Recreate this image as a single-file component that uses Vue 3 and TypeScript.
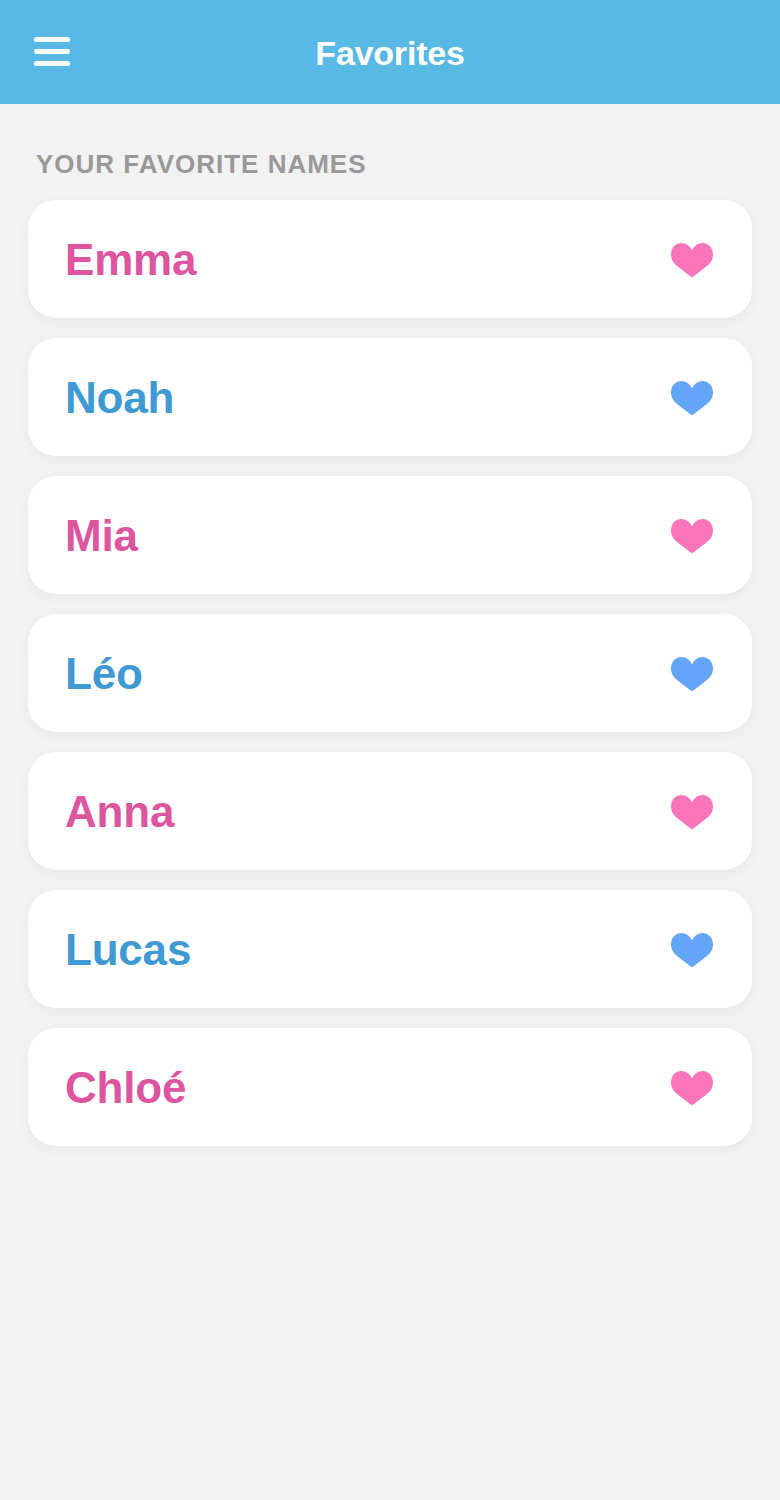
<script setup lang="ts">
interface FavName {
  name: string
  kind: 'girl' | 'boy'
}

const names: FavName[] = [
  { name: 'Emma', kind: 'girl' },
  { name: 'Noah', kind: 'boy' },
  { name: 'Mia', kind: 'girl' },
  { name: 'Léo', kind: 'boy' },
  { name: 'Anna', kind: 'girl' },
  { name: 'Lucas', kind: 'boy' },
  { name: 'Chloé', kind: 'girl' }
]
</script>

<template>
  <div class="page">
    <header class="top-bar">
      <button class="menu-btn" aria-label="Menu">
        <span></span>
        <span></span>
        <span></span>
      </button>
      <h1 class="title">Favorites</h1>
    </header>

    <main class="content">
      <h2 class="section-label">YOUR FAVORITE NAMES</h2>
      <ul class="list">
        <li v-for="item in names" :key="item.name" class="card">
          <span class="name" :class="item.kind">{{ item.name }}</span>
          <svg class="heart" :class="item.kind" viewBox="0 -2 44 36" width="44" height="36">
            <path d="M22 34C21.400 34 20.900 33.700 20.300 33.200L7 23C3 19.800 1 16 1 11.500 1 5 5.400 0 11.200 0 15.800 0 19.800 2.800 22 7.200 24.200 2.800 28.200 0 32.800 0 38.600 0 43 5 43 11.500 43 16 41 19.800 37 23L23.700 33.200C23.100 33.700 22.600 34 22 34Z" />
          </svg>
        </li>
      </ul>
    </main>
  </div>
</template>

<style scoped>
.page {
  width: 780px;
  height: 1500px;
  background: #f2f2f2;
  font-family: 'Liberation Sans', Arial, sans-serif;
}

.top-bar {
  position: relative;
  height: 104px;
  background: #59b9e5;
  display: flex;
  align-items: center;
  justify-content: center;
}

.menu-btn {
  position: absolute;
  left: 34px;
  top: 37px;
  width: 36px;
  height: 29px;
  padding: 0;
  border: none;
  background: transparent;
  display: flex;
  flex-direction: column;
  justify-content: space-between;
}

.menu-btn span {
  display: block;
  height: 5px;
  border-radius: 2.5px;
  background: #fff;
}

.title {
  margin: 2px 0 0;
  color: #fff;
  font-size: 34px;
  font-weight: 700;
  letter-spacing: -0.2px;
}

.content {
  padding: 45px 28px 0;
}

.section-label {
  margin: 0 0 21px 8px;
  font-size: 26px;
  line-height: 30px;
  font-weight: 700;
  letter-spacing: 1px;
  color: #999;
}

.list {
  list-style: none;
  margin: 0;
  padding: 0;
  display: flex;
  flex-direction: column;
  gap: 20px;
}

.card {
  height: 118px;
  box-sizing: border-box;
  padding: 0 38px 0 37px;
  background: #fff;
  border-radius: 28px;
  box-shadow: 0 3px 12px rgba(0, 0, 0, 0.05);
  display: flex;
  align-items: center;
  justify-content: space-between;
}

.name {
  padding-top: 2px;
  font-size: 44px;
  font-weight: 700;
  letter-spacing: -0.2px;
}

.name.girl {
  color: #dc559e;
}

.name.boy {
  color: #3f99d3;
}

.heart.girl {
  fill: #f974b8;
}

.heart.boy {
  fill: #63a6f8;
}
</style>
